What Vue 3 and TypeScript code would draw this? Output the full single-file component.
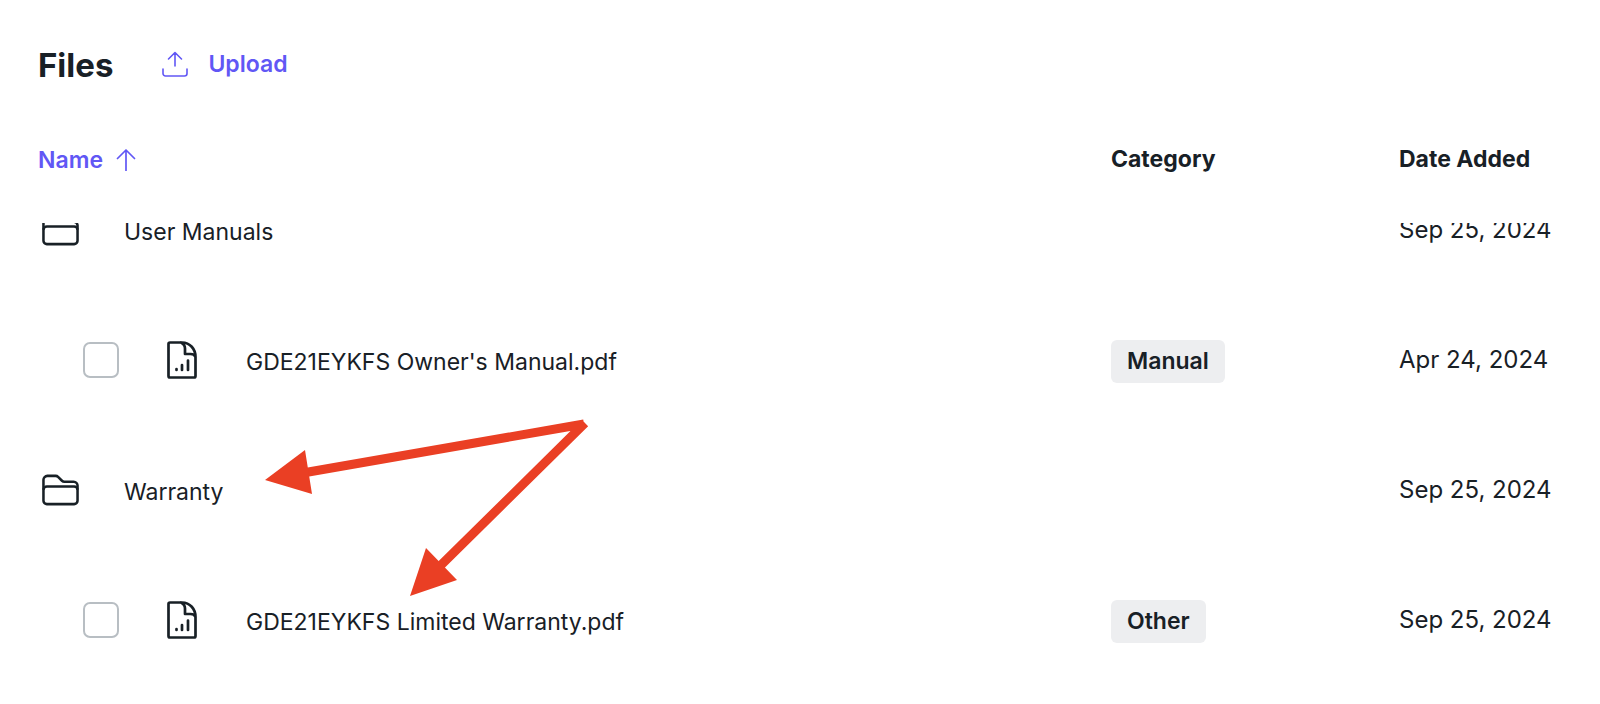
<script setup lang="ts">
import { ref } from 'vue'

interface FileRow {
  id: string
  kind: 'folder' | 'file'
  name: string
  category?: string
  date: string
}

const rows: FileRow[] = [
  { id: 'manuals', kind: 'folder', name: 'User Manuals', date: 'Sep 25, 2024' },
  { id: 'owners-manual', kind: 'file', name: "GDE21EYKFS Owner's Manual.pdf", category: 'Manual', date: 'Apr 24, 2024' },
  { id: 'warranty', kind: 'folder', name: 'Warranty', date: 'Sep 25, 2024' },
  { id: 'limited-warranty', kind: 'file', name: 'GDE21EYKFS Limited Warranty.pdf', category: 'Other', date: 'Sep 25, 2024' },
]

const selected = ref<string[]>([])
</script>

<template>
  <main class="files">
    <header class="toolbar">
      <h1>Files</h1>
      <button type="button" class="upload">
        <svg class="upload-icon" viewBox="0 0 26 26" aria-hidden="true">
          <path d="M13 15V1.5M6.5 8 13 1.5 19.500 8M1 18v4.500a2.500 2.500 0 0 0 2.500 2.500h19a2.500 2.500 0 0 0 2.500-2.500v-4.500" />
        </svg>
        <span>Upload</span>
      </button>
    </header>

    <table>
      <thead>
        <tr>
          <th scope="col" aria-sort="ascending">
            <button type="button" class="sort">
              <span>Name</span>
              <svg class="sort-icon" viewBox="0 0 20 22" aria-hidden="true">
                <path d="M10 21.500V1M1.500 9.500 10 1l8.500 8.500" />
              </svg>
            </button>
          </th>
          <th scope="col">Category</th>
          <th scope="col">Date Added</th>
        </tr>
      </thead>
      <tbody>
        <tr v-for="row in rows" :key="row.id">
          <td v-if="row.kind === 'folder'" class="name folder">
            <svg class="folder-icon" viewBox="0 0 38 32" aria-hidden="true">
              <path d="M1.500 15V5.500a4 4 0 0 1 4-4h8.500q1.500 0 2.500 1l4 4q1 1 2.500 1H32.500a4 4 0 0 1 4 4V15" />
              <rect x="1.500" y="12.500" width="35" height="18" rx="3.500" />
            </svg>
            <span class="title">{{ row.name }}</span>
          </td>
          <td v-else class="name file">
            <input :id="row.id" v-model="selected" type="checkbox" :value="row.id" />
            <svg class="file-icon" viewBox="0 0 30 38" aria-hidden="true">
              <path d="M3 1.500h12C23 1.500 28.500 8 28.500 16v19q0 1.500-1.500 1.500H3q-1.500 0-1.500-1.500V3q0-1.500 1.500-1.500zM14 1.500q4 2 4 6V13h5.500q4 0 5 3" />
              <path d="M9.500 28v1M15 24v5M21 19.500V29" />
            </svg>
            <label class="title" :for="row.id">{{ row.name }}</label>
          </td>
          <td><span v-if="row.category" class="chip">{{ row.category }}</span></td>
          <td class="date">{{ row.date }}</td>
        </tr>
      </tbody>
    </table>

    <svg class="arrows" viewBox="0 0 324 180" aria-hidden="true">
      <path class="shaft" d="M32 58 319 8M170 155 320 7" />
      <path class="head" d="M0 64 40 34 47 78zM145 180 161 132 192 164z" />
    </svg>
  </main>
</template>

<style>
body {
  margin: 0;
  background: #fff;
}
</style>

<style scoped>
.files {
  position: relative;
  padding: 36px 0 0 38px;
  color: #182026;
  font-family: Inter, "Liberation Sans", sans-serif;
  font-size: 23px;
  line-height: 32px;
}

svg {
  flex: none;
  fill: none;
  stroke: currentColor;
  stroke-linecap: round;
  stroke-linejoin: round;
}

button {
  display: flex;
  align-items: center;
  padding: 0;
  border: 0;
  background: none;
  color: #6157f5;
  font: inherit;
  font-weight: 600;
  cursor: pointer;
}

.toolbar {
  display: flex;
  align-items: center;
  gap: 49px;
  height: 58px;
}

h1 {
  margin: 0;
  font-size: 33px;
  font-weight: 700;
}

.upload {
  gap: 20px;
  padding-bottom: 2px;
}

.upload-icon {
  width: 26px;
  height: 26px;
  stroke-width: 1.6;
}

.sort {
  gap: 13px;
  padding-top: 2px;
}

.sort-icon {
  width: 20px;
  height: 22px;
  stroke-width: 1.7;
}

table,
thead {
  display: block;
}

tr {
  display: grid;
  grid-template-columns: minmax(0, 1fr) 288px 201px;
  align-items: center;
}

thead tr {
  height: 129px;
}

th,
td {
  padding: 0;
  text-align: left;
}

th {
  font-weight: 700;
}

/* The list is scrolled, so its first row is cut by the header. */
tbody {
  display: block;
  overflow: hidden;
}

tbody tr {
  height: 130px;
}

tbody tr:first-child {
  margin-top: -58px;
}

.name {
  display: flex;
  align-items: center;
}

.title {
  padding-top: 4px;
}

.folder {
  gap: 45px;
  padding-left: 4px;
}

.file {
  padding-left: 45px;
}

.folder-icon {
  width: 37px;
  height: 32px;
  stroke-width: 2.6;
}

.file-icon {
  width: 30px;
  height: 38px;
  margin: 0 49px 0 48px;
  stroke-width: 2.7;
}

input {
  appearance: none;
  flex: none;
  width: 36px;
  height: 36px;
  margin: 0;
  border: 2px solid #b8bec3;
  border-radius: 7px;
  background: #fff;
}

input:checked {
  border-color: #6157f5;
  background: #6157f5;
}

.chip {
  display: inline-block;
  margin-top: 2px;
  padding: 5px 16px 6px;
  border-radius: 6px;
  background: #edeef0;
  font-weight: 600;
}

.date {
  font-size: 24px;
}

.arrows {
  position: absolute;
  top: 416px;
  left: 265px;
  width: 324px;
  height: 180px;
  pointer-events: none;
}

.shaft {
  stroke: #ea3f24;
  stroke-width: 9;
  stroke-linecap: butt;
}

.head {
  fill: #ea3f24;
  stroke: none;
}
</style>
